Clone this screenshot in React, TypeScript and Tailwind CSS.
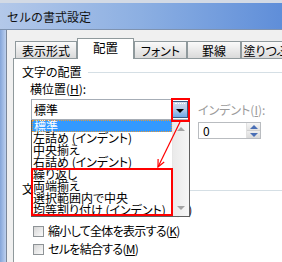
import React from "react";

const Tri = ({ dir, color }: { dir: "up" | "down"; color: string }) =>
  dir === "down" ? (
    <div
      className="w-0 h-0 border-l-[4px] border-r-[4px] border-t-[4px] border-l-transparent border-r-transparent"
      style={{ borderTopColor: color }}
    />
  ) : (
    <div
      className="w-0 h-0 border-l-[4px] border-r-[4px] border-b-[4px] border-l-transparent border-r-transparent"
      style={{ borderBottomColor: color }}
    />
  );

const Tab = ({ label, w, selected }: { label: string; w: string; selected?: boolean }) =>
  selected ? (
    <div
      className={`${w} shrink-0 h-[21px] -mb-[1px] relative z-10 bg-white border-t border-l border-r border-[#8f999c] flex items-center justify-center text-[12.5px] pb-[2px]`}
    >
      {label}
    </div>
  ) : (
    <div
      className={`${w} shrink-0 h-[17px] bg-linear-to-b from-[#fafafa] to-[#dadada] border-t border-l border-r border-[#8f999c] flex items-center justify-center pt-[1px] overflow-hidden whitespace-nowrap`}
    >
      {label}
    </div>
  );

const Check = ({ children, mt }: { children: React.ReactNode; mt: string }) => (
  <div className={`${mt} h-[16px] flex items-center ml-[11px] gap-[4px] whitespace-nowrap`}>
    <div className="w-[11px] h-[11px] border border-[#8e9396] bg-linear-to-br from-[#d6d6d6] to-[#fbfbfb] shrink-0" />
    <span className="leading-[16px] tracking-[-0.7px]">{children}</span>
  </div>
);

export default function App() {
  const items = [
    "標準",
    "左詰め (インデント)",
    "中央揃え",
    "右詰め (インデント)",
    "繰り返し",
    "両端揃え",
    "選択範囲内で中央",
    "均等割り付け (インデント)",
  ];
  return (
    <div className="relative w-[282px] h-[262px] overflow-hidden bg-[#f0f0f0] text-[12px] text-black font-['Noto_Sans_CJK_JP','Noto_Sans',sans-serif]">
      {/* title bar */}
      <div className="h-[30px] border-t-[3px] border-t-[#d3dae5] border-b border-b-[#7f93b0] bg-linear-to-r from-[#b3c8e9] via-[#8cafe2] to-[#5f8ed9] flex items-center pl-[7px] pt-[1px]">
        <span className="text-[12px] leading-[16px] text-[#111]">セルの書式設定</span>
      </div>
      <div className="flex h-[232px]">
        {/* left frame */}
        <div className="w-[7px] shrink-0 bg-linear-to-r from-[#84a5d9] to-[#bdd0ee] border-r border-r-[#7b8799]" />
        {/* body */}
        <div className="flex-1 flex flex-col pl-[6px] pt-[8px] [font-feature-settings:'palt']">
          <div className="h-[20px] flex items-end">
            <div className="w-[2px] shrink-0" />
            <Tab label="表示形式" w="w-[62px]" />
            <Tab label="配置" w="w-[57px]" selected />
            <Tab label="フォント" w="w-[53px]" />
            <Tab label="罫線" w="w-[54px]" />
            <Tab label="塗りつぶし" w="w-[60px]" />
          </div>
          <div className="flex-1 bg-white border-t border-l border-[#8f999c] pl-[8px] flex flex-col">
            {/* group 1 */}
            <div className="mt-[5px] h-[16px] flex items-center">
              <span className="leading-[16px] whitespace-nowrap">文字の配置</span>
              <div className="flex-1 h-px bg-[#d5dfe5] ml-[6px] mt-[1px]" />
            </div>
            <div className="mt-[1px] flex">
              <div className="ml-[8px] flex flex-col">
                <span className="leading-[16px] whitespace-nowrap">
                  横位置(<span className="underline">H</span>):
                </span>
                <div className="mt-[2px] ml-[1px] w-[159px] h-[21px] border border-[#a6adb6] bg-white flex p-[1px]">
                  <div className="flex-1 pl-[1px] leading-[17px]">標準</div>
                  <div className="w-[16px] border border-[#3a5b80] bg-linear-to-b from-[#d2dcea] via-[#b2c9e6] to-[#6fa7e6] flex flex-col items-center">
                    <div className="w-[10px] mt-[1px] border-t border-dotted border-white" />
                    <div className="mt-[5px]">
                      <Tri dir="down" color="#000" />
                    </div>
                  </div>
                </div>
              </div>
              <div className="ml-[8px] mt-[21px] flex flex-col">
                <span className="leading-[16px] text-[#9b9b9b] whitespace-nowrap">
                  インデント(<span className="underline">I</span>):
                </span>
                <div className="mt-[4px] w-[63px] h-[17px] border border-[#b9bcc0] bg-white flex">
                  <div className="flex-1 pl-[4px] leading-[15px] text-[12px]">0</div>
                  <div className="w-[14px] flex flex-col border-l border-[#e1e1e1]">
                    <div className="flex-1 bg-linear-to-b from-[#f6f6f6] to-[#e2e2e2] flex items-center justify-center">
                      <Tri dir="up" color="#4a6fb5" />
                    </div>
                    <div className="flex-1 bg-linear-to-b from-[#eeeeee] to-[#dadada] flex items-center justify-center border-t border-[#cfcfcf]">
                      <Tri dir="down" color="#4a6fb5" />
                    </div>
                  </div>
                </div>
              </div>
            </div>
            {/* group 2 */}
            <div className="mt-[42px] h-[16px] flex items-center">
              <span className="leading-[16px] whitespace-nowrap">文字の制御</span>
              <div className="flex-1 h-px bg-[#d5dfe5] ml-[6px] mt-[3px]" />
            </div>
            <div className="flex flex-col">
              <Check mt="mt-[5px]">
                折り返して全体を表示する(<span className="underline">W</span>)
              </Check>
              <Check mt="mt-[5px]">
                縮小して全体を表示する(<span className="underline">K</span>)
              </Check>
              <Check mt="mt-[2px]">
                セルを結合する(<span className="underline">M</span>)
              </Check>
            </div>
          </div>
        </div>
      </div>

      {/* dropdown list */}
      <div className="absolute left-[31px] top-[120px] w-[159px] h-[97px] bg-white border-l border-r border-b border-[#5f5f5f] flex [font-feature-settings:'palt']">
        <div className="flex-1 flex flex-col overflow-hidden">
          {items.map((t, i) => (
            <div
              key={t}
              className={
                i === 0
                  ? "h-[12px] leading-[12px] pl-[2px] whitespace-nowrap bg-[#3399ff] text-white outline-1 outline-dotted outline-[#e39a3c] -outline-offset-1"
                  : "h-[12px] leading-[12px] pl-[1px] whitespace-nowrap"
              }
            >
              {t}
            </div>
          ))}
        </div>
        <div className="w-[17px] bg-linear-to-r from-[#eaeaea] to-[#f6f6f6] border-l border-[#e6e6e6] flex flex-col">
          <div className="h-[16px] flex items-center justify-center pt-[2px]">
            <Tri dir="up" color="#a3a3a3" />
          </div>
          <div className="flex-1" />
          <div className="h-[16px] flex items-center justify-center pb-[1px]">
            <Tri dir="down" color="#a3a3a3" />
          </div>
        </div>
      </div>

      {/* annotations */}
      <div className="absolute left-[31px] top-[168px] w-[142px] h-[48px] border-2 border-[#ff0000] pointer-events-none" />
      <div className="absolute left-[171px] top-[98px] w-[19px] h-[24px] border-2 border-[#ff0000] pointer-events-none" />
      <svg className="absolute left-0 top-0 pointer-events-none" width="282" height="262">
        <line x1="180" y1="122" x2="158" y2="167" stroke="#ff0000" strokeWidth="1.2" />
        <polyline points="164.2,162 158,167 158.1,159" fill="none" stroke="#ff0000" strokeWidth="1.2" />
      </svg>
    </div>
  );
}
